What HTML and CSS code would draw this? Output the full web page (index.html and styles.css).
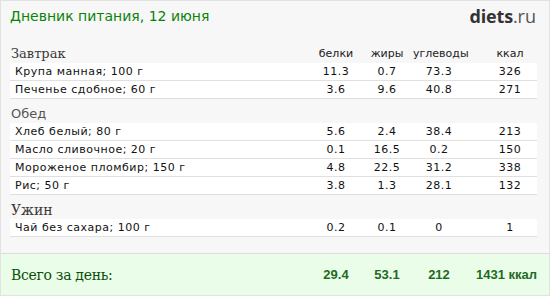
FILE: index.html
```html
<!DOCTYPE html>
<html lang="ru">
<head>
<meta charset="utf-8">
<title>Дневник питания</title>
<link rel="stylesheet" href="styles.css">
</head>
<body>
<div class="page">
  <div class="content">
    <div class="header">
      <div class="title">Дневник питания, 12 июня</div>
      <div class="logo"><span class="logo-b">diets</span><span class="logo-r">.ru</span></div>
    </div>

    <div class="grid section-head">
      <div class="sec serif s13">Завтрак</div>
      <div class="colh">белки</div>
      <div class="colh">жиры</div>
      <div class="colh">углеводы</div>
      <div class="colh last">ккал</div>
    </div>
    <div class="grid row"><div class="name">Крупа манная; 100 г</div><div>11.3</div><div>0.7</div><div>73.3</div><div class="last">326</div></div>
    <div class="grid row"><div class="name">Печенье сдобное; 60 г</div><div>3.6</div><div>9.6</div><div>40.8</div><div class="last">271</div></div>

    <div class="section-head"><div class="sec sans">Обед</div></div>
    <div class="grid row"><div class="name">Хлеб белый; 80 г</div><div>5.6</div><div>2.4</div><div>38.4</div><div class="last">213</div></div>
    <div class="grid row"><div class="name">Масло сливочное; 20 г</div><div>0.1</div><div>16.5</div><div>0.2</div><div class="last">150</div></div>
    <div class="grid row"><div class="name">Мороженое пломбир; 150 г</div><div>4.8</div><div>22.5</div><div>31.2</div><div class="last">338</div></div>
    <div class="grid row"><div class="name">Рис; 50 г</div><div>3.8</div><div>1.3</div><div>28.1</div><div class="last">132</div></div>

    <div class="section-head"><div class="sec serif s14">Ужин</div></div>
    <div class="grid row"><div class="name">Чай без сахара; 100 г</div><div>0.2</div><div>0.1</div><div>0</div><div class="last">1</div></div>
  </div>

  <div class="total">
    <div class="grid total-grid">
      <div class="total-label">Всего за день:</div>
      <div>29.4</div>
      <div>53.1</div>
      <div>212</div>
      <div class="total-last">1431 ккал</div>
    </div>
  </div>
</div>
</body>
</html>
```

FILE: styles.css
```css
* { box-sizing: border-box; }
html, body { margin: 0; padding: 0; background: #fff; }
.page {
  width: 550px;
  height: 296px;
  border: 1px solid #e2e2e2;
  background: #f7f7f7;
  display: flex;
  flex-direction: column;
}
.content {
  padding: 0 12px 0 9px;
  flex: 1;
}
.header {
  height: 38px;
  display: flex;
  justify-content: space-between;
  align-items: flex-start;
  padding-top: 6px;
}
.title {
  font-family: "DejaVu Sans", Verdana, sans-serif;
  font-size: 14px;
  color: #0a830a;
  line-height: 18px;
}
.logo {
  font-family: "Open Sans", sans-serif;
  font-size: 18px;
  line-height: 20px;
  padding-right: 1px;
  margin-top: -1px;
}
.logo-b { font-weight: 700; color: #333; letter-spacing: -0.2px; }
.logo-r { font-weight: 400; color: #555; }

.grid {
  display: grid;
  grid-template-columns: 1fr 50px 52px 52px 72px;
  align-items: center;
}
.grid > div { text-align: center; }
.grid > .last { padding-left: 18px; }

.section-head {
  height: 24px;
  display: grid;
  grid-template-columns: 1fr 50px 52px 52px 72px;
  align-items: end;
  padding-bottom: 0;
}
.sec { text-align: left !important; padding-left: 1px; }
.serif {
  font-family: "DejaVu Serif", Georgia, serif;
  color: #3a3a3a;
  line-height: 18px;
}
.s13 { font-size: 13px; }
.s14 { font-size: 14px; }
.sans {
  font-family: "DejaVu Sans", Verdana, sans-serif;
  font-size: 13px;
  color: #555;
  line-height: 18px;
}
.colh {
  font-family: "DejaVu Sans", Verdana, sans-serif;
  font-size: 11px;
  color: #222;
  line-height: 14px;
  padding-bottom: 2px;
}
.row {
  height: 18px;
  background: #fff;
  border-bottom: 1px solid #e0e0e0;
  font-family: "DejaVu Sans", Verdana, sans-serif;
  font-size: 11px;
  letter-spacing: 0.5px;
  color: #111;
}
.row .name { text-align: left; padding-left: 5px; }

.total {
  height: 42px;
  border-top: 1px solid #dcdcdc;
  background: #e9fde9;
  padding: 0 12px 0 9px;
  display: flex;
  align-items: center;
}
.total-grid { width: 100%; }
.total-grid > div {
  font-family: "Liberation Sans", Arial, sans-serif;
  font-weight: 700;
  font-size: 13px;
  color: #1f6a1f;
}
.total-grid > .total-label {
  text-align: left;
  font-family: "DejaVu Serif", Georgia, serif;
  font-weight: 400;
  font-size: 14px;
  letter-spacing: -0.3px;
  color: #0b4f0b;
  padding-left: 1px;
}
.total-grid > .total-last { text-align: right; }
```
